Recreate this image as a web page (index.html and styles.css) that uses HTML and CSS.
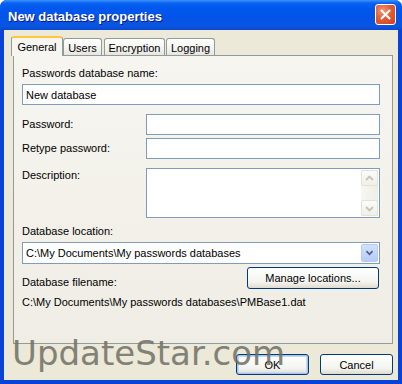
FILE: index.html
```html
<!DOCTYPE html>
<html>
<head>
<meta charset="utf-8">
<link rel="stylesheet" href="styles.css">
</head>
<body>
<div class="window">
  <div class="titlebar">
    <span class="title">New database properties</span>
    <div class="close">
      <svg width="20" height="21" viewBox="0 0 20 21"><path d="M6 6.5 L14 14.5 M14 6.5 L6 14.5" stroke="#fff" stroke-width="2.2" stroke-linecap="square"/></svg>
    </div>
  </div>
  <div class="client">
    <div class="tabs">
      <div class="tab active t-general">General</div>
      <div class="tab t-users">Users</div>
      <div class="tab t-enc">Encryption</div>
      <div class="tab t-log">Logging</div>
    </div>
    <div class="panel">
      <div class="label first">Passwords database name:</div>
      <div class="input name">New database</div>
      <div class="row r-pass"><span class="label lbl">Password:</span><div class="input field"></div></div>
      <div class="row r-retype"><span class="label lbl">Retype password:</span><div class="input field"></div></div>
      <div class="row r-desc"><span class="label lbl desc-lbl">Description:</span>
        <div class="input field memo">
          <div class="scroll">
            <div class="sbtn"><svg width="15" height="15" viewBox="0 0 15 15"><path d="M4 9 L7.5 5.5 L11 9" fill="none" stroke="#c6c4b8" stroke-width="1.8"/></svg></div>
            <div class="sbtn"><svg width="15" height="15" viewBox="0 0 15 15"><path d="M4 6 L7.5 9.5 L11 6" fill="none" stroke="#c6c4b8" stroke-width="1.8"/></svg></div>
          </div>
        </div>
      </div>
      <div class="label loc-lbl">Database location:</div>
      <div class="input combo">
        <span>C:\My Documents\My passwords databases</span>
        <div class="dd"><svg width="17" height="18" viewBox="0 0 17 18"><path d="M5 7 L8.5 10.5 L12 7" fill="none" stroke="#4d6185" stroke-width="2"/></svg></div>
      </div>
      <div class="row r-manage">
        <span class="label">Database filename:</span>
        <div class="btn manage">Manage locations...</div>
      </div>
      <div class="label path">C:\My Documents\My passwords databases\PMBase1.dat</div>
    </div>
    <div class="footer">
      <div class="btn default">OK</div>
      <div class="btn">Cancel</div>
    </div>
    <div class="watermark">UpdateStar.com</div>
  </div>
</div>
</body>
</html>
```
FILE: styles.css
```css
* { box-sizing: border-box; }
html, body { margin: 0; padding: 0; background: #fff; }
body {
  font-family: "Liberation Sans", Arial, sans-serif;
  font-size: 11px;
  color: #000;
}
.window {
  width: 402px;
  height: 384px;
  display: flex;
  flex-direction: column;
  background: #0842d6;
  border-radius: 7px 7px 0 0;
  overflow: hidden;
}
.titlebar {
  height: 30px;
  flex: none;
  display: flex;
  align-items: center;
  justify-content: space-between;
  padding: 0 6px 1px 8px;
  background: linear-gradient(#3d95ff 0, #0a63f0 3px, #0058ee 8px, #0453e8 18px, #0a55e0 26px, #0848d0 30px);
}
.title {
  color: #fff;
  font-weight: bold;
  font-size: 13px;
  text-shadow: 1px 1px 0 #0a1883;
  margin-top: 3px;
}
.close {
  width: 21px;
  height: 21px;
  border: 1px solid #fff;
  border-radius: 3px;
  background: radial-gradient(circle at 35% 30%, #f09a7c 0, #e3623b 40%, #cf3f1a 100%);
  display: flex;
  align-items: center;
  justify-content: center;
}
.close svg { display: block; }
.client {
  flex: 1;
  margin: 0 4px 4px 4px;
  background: #ece9d8;
  padding: 6px 5px 0 9px;
  display: flex;
  flex-direction: column;
  position: relative;
}
.tabs {
  height: 19px;
  display: flex;
  align-items: flex-end;
}
.tab {
  height: 17px;
  border: 1px solid #919b9c;
  border-bottom: none;
  border-radius: 3px 3px 0 0;
  background: linear-gradient(#ffffff, #f3f3ef 60%, #e6e5df);
  display: flex;
  align-items: center;
  justify-content: center;
  padding-top: 1px;
}
.tab.active {
  height: 20px;
  margin-bottom: -1px;
  position: relative;
  z-index: 1;
  background: #f6f5f0;
  border-top: 2px solid #ffc83c;
  border-radius: 3px 3px 0 0;
  padding-top: 0;
  padding-bottom: 1px;
}
.t-general { width: 52px; margin-left: -2px; }
.t-users { width: 39px; }
.t-enc { width: 61px; margin-left: 2px; }
.t-log { width: 49px; margin-left: 1px; }
.panel {
  width: 380px;
  height: 289px;
  border: 1px solid #919b9c;
  background: linear-gradient(#f6f5f0, #efede4);
  padding: 0 12px 0 8px;
  display: flex;
  flex-direction: column;
}
.label { line-height: 13px; white-space: nowrap; }
.first { margin-top: 11px; }
.input {
  background: #fff;
  border: 1px solid #7f9db9;
  height: 21px;
  display: flex;
  align-items: center;
  padding-left: 3px;
  white-space: nowrap;
}
.name { margin-top: 4px; }
.row { display: flex; align-items: center; }
.lbl { width: 124px; flex: none; }
.field { flex: 1; }
.r-pass { margin-top: 9px; }
.r-retype { margin-top: 3px; }
.r-desc { margin-top: 9px; align-items: flex-start; }
.desc-lbl { padding-top: 1px; }
.memo {
  height: 50px;
  justify-content: flex-end;
  align-items: stretch;
  padding: 1px;
}
.scroll {
  width: 17px;
  display: flex;
  flex-direction: column;
  justify-content: space-between;
  background: linear-gradient(90deg, #f7f7f4, #eeede5);
}
.sbtn {
  height: 16px;
  border: 1px solid #e2e1da;
  border-radius: 2px;
  background: linear-gradient(#fbfbf9, #f0efe9);
  display: flex;
  align-items: center;
  justify-content: center;
}
.sbtn svg, .dd svg { display: block; }
.loc-lbl { margin-top: 7px; }
.combo {
  margin-top: 4px;
  height: 22px;
  justify-content: space-between;
  padding-right: 1px;
}
.dd {
  width: 17px;
  height: 18px;
  border: 1px solid #b9ccf7;
  border-radius: 2px;
  background: linear-gradient(#d3e0fc, #b6cbf8);
  display: flex;
  align-items: center;
  justify-content: center;
}
.r-manage {
  margin-top: 3px;
  justify-content: space-between;
  align-items: flex-end;
}
.btn {
  height: 21px;
  border: 1px solid #003c74;
  border-radius: 3px;
  background: linear-gradient(#ffffff, #f4f4ef 70%, #dedad0);
  display: flex;
  align-items: center;
  justify-content: center;
}
.manage { width: 132px; height: 22px; margin-right: 1px; }
.path { margin-top: 7px; }
.footer {
  margin-top: 10px;
  display: flex;
  justify-content: flex-end;
  gap: 11px;
}
.footer .btn { width: 73px; }
.btn.default { box-shadow: inset 0 0 0 1px #a8c4ee, inset 0 0 0 2px #c6d8f6; }
.watermark {
  position: absolute;
  left: 8px;
  top: 303px;
  font-family: "DejaVu Sans", sans-serif;
  font-size: 34px;
  line-height: 40px;
  color: #6f6f66;
  opacity: 0.85;
  pointer-events: none;
}
```
